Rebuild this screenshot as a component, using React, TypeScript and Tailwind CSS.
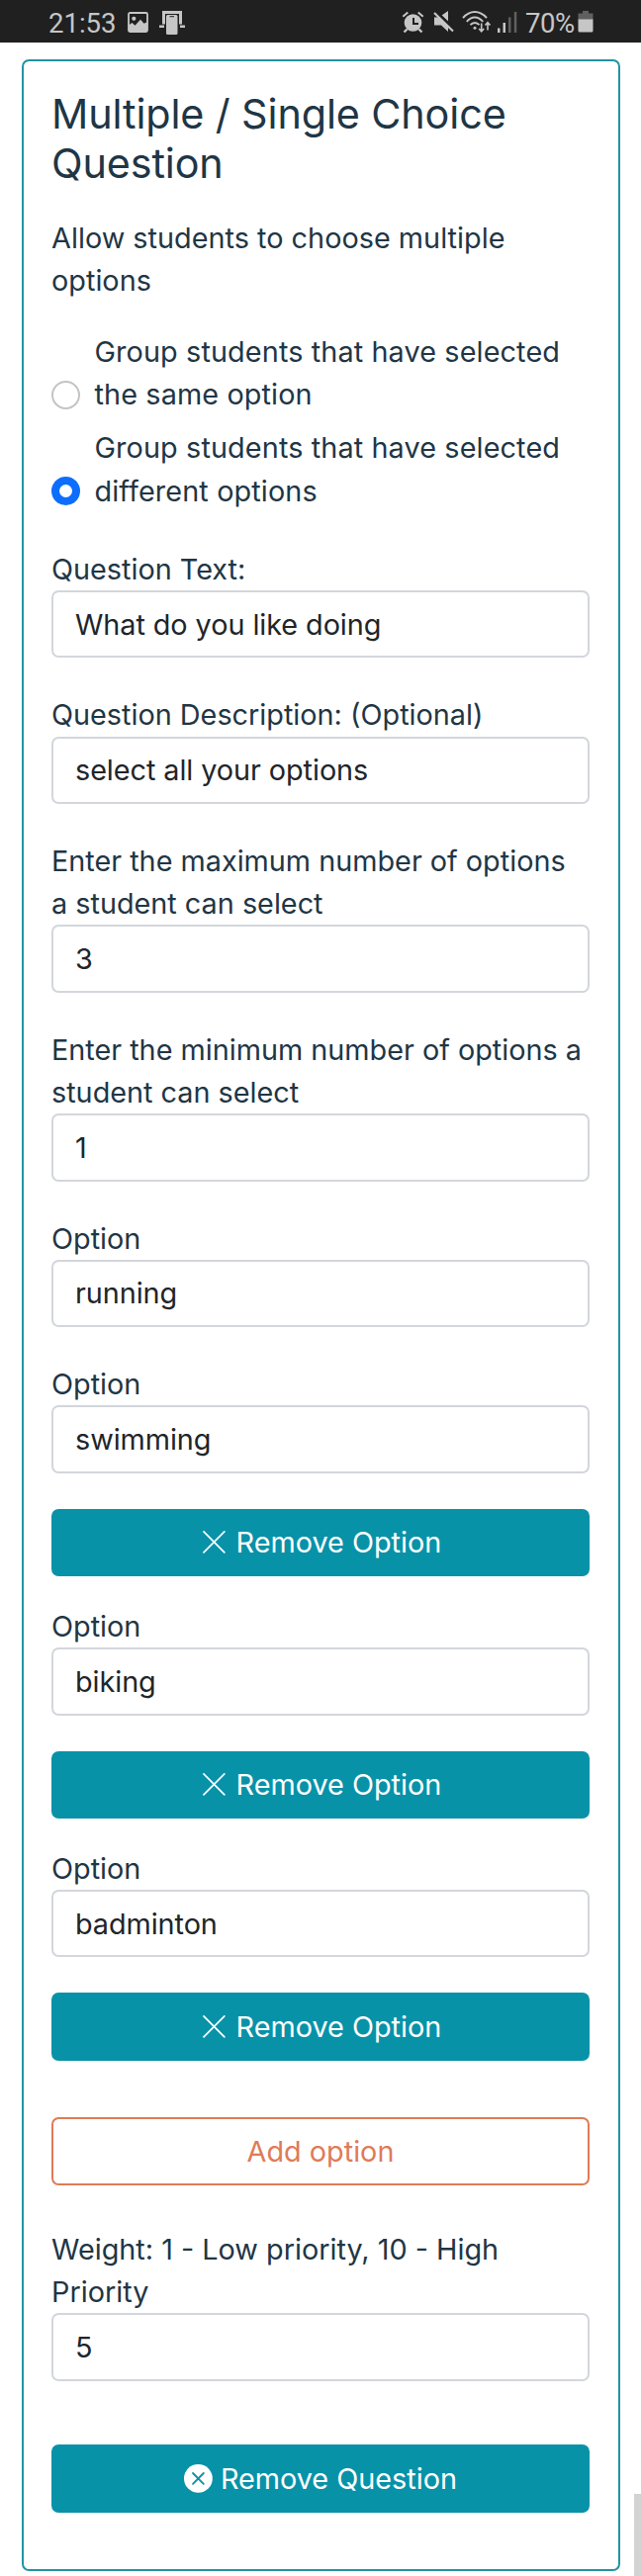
import React from "react";

function StatusBar() {
  return (
    <div className="flex h-[43px] shrink-0 items-center bg-[#202020] pl-[49px] pr-[48px] font-['Roboto',sans-serif] text-[27.5px] leading-[43px] text-[#c6c6c6]">
      <span className="relative top-[2px] w-[68px] whitespace-nowrap">21:53</span>
      <svg className="ml-[12px] mt-[1px] h-[21px] w-[21px]" viewBox="0 0 21 21" fill="none">
        <rect x="1" y="1" width="19" height="19" rx="1.5" stroke="#c6c6c6" strokeWidth="1.8" />
        <circle cx="6.3" cy="6.8" r="2.1" fill="#c6c6c6" />
        <path d="M1 13.5l3.5-2.5 3 2.7 5.5-6 3.5 4 3.5-1.5V20H1z" fill="#c6c6c6" />
      </svg>
      <svg className="ml-[11px] mt-[3px] h-[24px] w-[26px]" viewBox="0 0 26 24" fill="#c6c6c6">
        <path d="M3 0h20v13.5h-3V3H6v10.500H3z" />
        <path d="M0 14.500h5v2.500H0zM21 14.500h5v2.500h-5z" />
        <rect x="7" y="4" width="11.500" height="20" rx="1.500" />
        <path d="M10.500 5.200h4.500v1h-4.500z" fill="#202020" />
      </svg>
      <div className="ml-auto flex items-center">
        <svg className="mt-[1px] h-[23px] w-[23px]" viewBox="0 0 23 23" fill="none" stroke="#c6c6c6">
          <circle cx="11.500" cy="12" r="8.800" fill="#c6c6c6" stroke="none" />
          <path d="M1.300 5.800l5-4.200M21.700 5.800l-5-4.200" strokeWidth="2" />
          <path d="M5.500 18.500l-3 3M17.500 18.500l3 3" strokeWidth="2.400" />
          <path d="M12 7v6h5" stroke="#202020" strokeWidth="2" />
        </svg>
        <svg className="ml-[9px] h-[22px] w-[22px]" viewBox="0 0 22 22" fill="#c6c6c6">
          <path d="M1 6.500h4.500l9.500 9v5.500l-7-6.500H1z" />
          <path d="M8.500 4.500L15 0v10.500z" />
          <path d="M3.500 1L21.500 18.500" stroke="#202020" strokeWidth="2" />
          <path d="M1 2l19 18.500" stroke="#c6c6c6" strokeWidth="2.200" />
        </svg>
        <svg className="ml-[7px] h-[22px] w-[30px]" viewBox="0 0 30 22" fill="none" stroke="#c6c6c6" strokeWidth="2">
          <path d="M1 7.200C8-1 18-1 25 7.200M4.800 10.800c5-5.800 11.400-5.800 16.400 0M8.500 14.200c2.700-3 6.300-3 9 0" />
          <circle cx="13" cy="17.200" r="1.500" fill="#c6c6c6" stroke="none" />
          <path d="M19.700 12.500v8M17.200 18l2.500 2.700 2.500-2.700M26 19.500V12M23.500 14.500L26 11.800l2.500 2.700" strokeWidth="1.600" />
        </svg>
        <svg className="ml-[6px] mt-[1px] h-[21px] w-[20px]" viewBox="0 0 20 21">
          <path d="M0 16.500h2.500V21H0zM5.500 11H8v10H5.500z" fill="#c6c6c6" />
          <path d="M11 5.500h2.500V21H11zM16.800 0h2.500v21h-2.500z" fill="#606060" />
        </svg>
        <span className="relative top-[2px] ml-[8px] w-[51px] whitespace-nowrap tracking-[-0.5px]">70%</span>
        <svg className="ml-[2px] h-[22px] w-[16px]" viewBox="0 0 16 22">
          <path d="M5 0h6v2.500h4.500V9H.500V2.500H5z" fill="#606060" />
          <path d="M.500 8.500h15V20a1.500 1.500 0 0 1-1.500 1.500H2A1.500 1.500 0 0 1 .500 20z" fill="#c6c6c6" />
        </svg>
      </div>
    </div>
  );
}

function Field({ label, value, className }: { label: React.ReactNode; value: string; className: string }) {
  return (
    <label className={className + " block"}>
      <span className="block whitespace-nowrap">{label}</span>
      <span className="flex h-[68.4px] items-center rounded-[7.2px] border-2 border-[#d3d6dc] px-[22px] tracking-[-0.06px] text-[#212529]">
        {value}
      </span>
    </label>
  );
}

function Choice({ lines, checked, className }: { lines: string[]; checked?: boolean; className: string }) {
  return (
    <div className={className + " flex items-end gap-[14.5px]"}>
      <span
        className={
          checked
            ? "mb-[6.5px] flex h-[29px] w-[29px] shrink-0 items-center justify-center rounded-full bg-[#0d6efd]"
            : "mb-[6.5px] h-[29px] w-[29px] shrink-0 rounded-full border-2 border-[#c4c4c4]"
        }
      >
        {checked && <span className="h-[13px] w-[13px] rounded-full bg-white" />}
      </span>
      <span className="whitespace-nowrap tracking-[0.12px]">
        {lines[0]}
        <br />
        {lines[1]}
      </span>
    </div>
  );
}

function RemoveOption() {
  return (
    <button className="mt-[36px] block h-[68.4px] w-full rounded-[7.2px] bg-[#0892a8] text-center text-white">
      <svg className="inline-block h-[1em] w-[1em] align-[-0.125em]" viewBox="0 0 16 16" fill="none" stroke="currentColor" strokeLinecap="round">
        <path d="M2.200 2.200l11.600 11.600M13.800 2.200L2.200 13.800" strokeWidth="0.95" />
      </svg>{" "}
      Remove Option
    </button>
  );
}

export default function App() {
  return (
    <div className="relative flex h-[2605px] w-[648px] flex-col overflow-hidden bg-white">
      <StatusBar />
      <div className="ml-[22px] mt-[17px] h-[2540px] w-[605px] rounded-[7.2px] border-2 border-[#2294a4] pl-[28px] pr-[29px] pt-[29px] font-['Inter',sans-serif] text-[28.8px] leading-[43.2px] text-[#1f3645]">
        <h3 className="whitespace-nowrap text-[41.3px] leading-[49.6px] tracking-[-0.11px]">
          Multiple / Single Choice
          <br />
          Question
        </h3>
        <p className="mt-[28.8px] whitespace-nowrap tracking-[0.02px]">
          Allow students to choose multiple
          <br />
          options
        </p>
        <Choice className="mt-[28.8px]" lines={["Group students that have selected", "the same option"]} />
        <Choice className="mt-[10.8px]" checked lines={["Group students that have selected", "different options"]} />
        <Field className="mt-[36px]" label="Question Text:" value="What do you like doing" />
        <Field className="mt-[36px]" label="Question Description: (Optional)" value="select all your options" />
        <Field
          className="mt-[36px]"
          label={<>Enter the maximum number of options<br />a student can select</>}
          value="3"
        />
        <Field
          className="mt-[36px]"
          label={<>Enter the minimum number of options a<br />student can select</>}
          value="1"
        />
        <Field className="mt-[36px]" label="Option" value="running" />
        <Field className="mt-[36px]" label="Option" value="swimming" />
        <RemoveOption />
        <Field className="mt-[28.8px]" label="Option" value="biking" />
        <RemoveOption />
        <Field className="mt-[28.8px]" label="Option" value="badminton" />
        <RemoveOption />
        <button className="mt-[57.6px] block h-[68.4px] w-full rounded-[7.2px] border-2 border-[#e07b56] text-center text-[#e07b56]">
          Add option
        </button>
        <Field
          className="mt-[43.2px]"
          label={<>Weight: 1 - Low priority, 10 - High<br />Priority</>}
          value="5"
        />
        <button className="mt-[64.8px] block h-[68.4px] w-full rounded-[7.2px] bg-[#0892a8] text-center text-white">
          <svg className="inline-block h-[1em] w-[1em] align-[-0.125em]" viewBox="0 0 16 16">
            <circle cx="8" cy="8" r="8" fill="white" />
            <path d="M5 5l6 6M11 5l-6 6" stroke="#0892a8" strokeLinecap="round" />
          </svg>{" "}
          Remove Question
        </button>
      </div>
      <div className="absolute bottom-0 right-0 h-[83px] w-[7px] bg-[#d3d3d3]" />
    </div>
  );
}
